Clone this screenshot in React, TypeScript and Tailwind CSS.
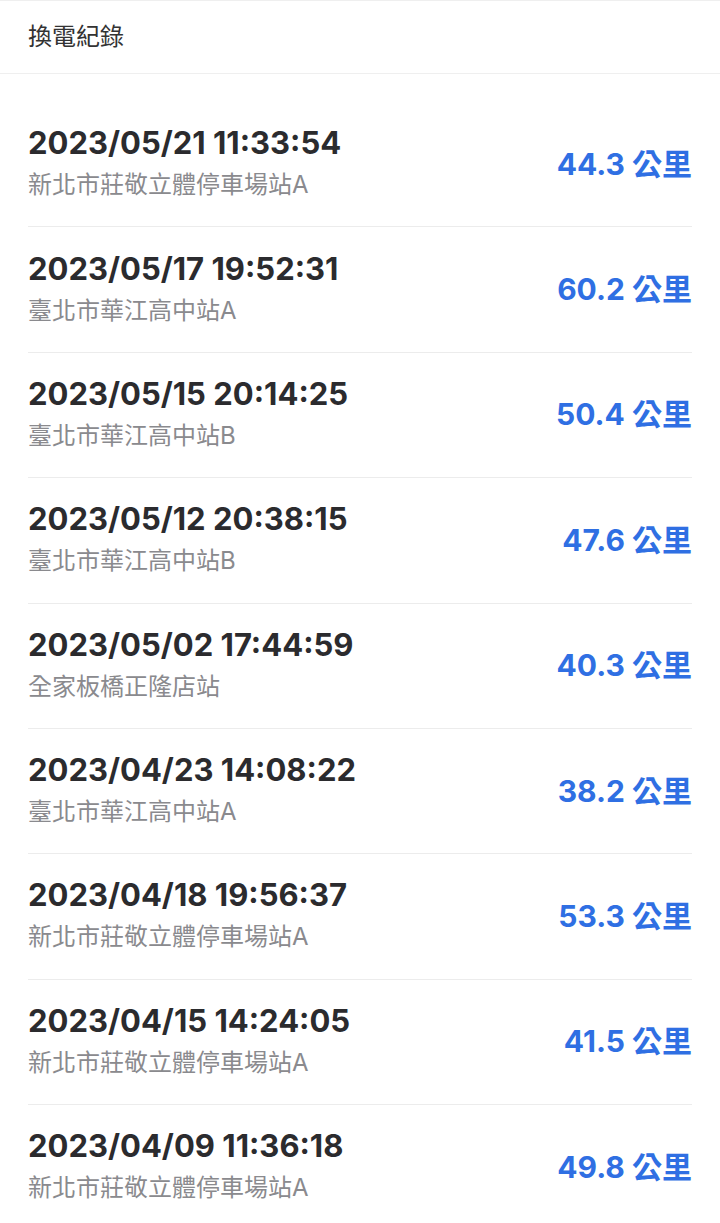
import React from 'react';

interface IRecord {
	time: string;
	station: string;
	km: string;
}

const records: IRecord[] = [
	{ time: '2023/05/21 11:33:54', station: '新北市莊敬立體停車場站A', km: '44.3' },
	{ time: '2023/05/17 19:52:31', station: '臺北市華江高中站A', km: '60.2' },
	{ time: '2023/05/15 20:14:25', station: '臺北市華江高中站B', km: '50.4' },
	{ time: '2023/05/12 20:38:15', station: '臺北市華江高中站B', km: '47.6' },
	{ time: '2023/05/02 17:44:59', station: '全家板橋正隆店站', km: '40.3' },
	{ time: '2023/04/23 14:08:22', station: '臺北市華江高中站A', km: '38.2' },
	{ time: '2023/04/18 19:56:37', station: '新北市莊敬立體停車場站A', km: '53.3' },
	{ time: '2023/04/15 14:24:05', station: '新北市莊敬立體停車場站A', km: '41.5' },
	{ time: '2023/04/09 11:36:18', station: '新北市莊敬立體停車場站A', km: '49.8' },
];

const RecordItem = ({ record }: { record: IRecord }) => (
	<li className="flex items-center justify-between py-[23.2px] border-b border-[#ececec] last:border-b-0">
		<div className="flex flex-col gap-[6px]">
			<span className="text-[31px] leading-[36px] font-bold text-[#2b2b2e]">
				{record.time}
			</span>
			<span className="text-[24px] leading-[36px] text-[#8a8a8e]">{record.station}</span>
		</div>
		<span className="text-[30px] font-bold text-[#2f6fe3]">{record.km} 公里</span>
	</li>
);

const App = () => {
	return (
		<div
			className="min-h-screen bg-white"
			style={{ fontFamily: 'Inter, "Noto Sans CJK TC", sans-serif' }}
		>
			<header className="h-[74px] flex items-center px-7 border-t border-b border-[#efefef]">
				<h1 className="text-[24px] text-[#333]">換電紀錄</h1>
			</header>
			<ul className="pt-[28px] px-7">
				{records.map((r) => (
					<RecordItem record={r} key={r.time} />
				))}
			</ul>
		</div>
	);
};

export default App;
